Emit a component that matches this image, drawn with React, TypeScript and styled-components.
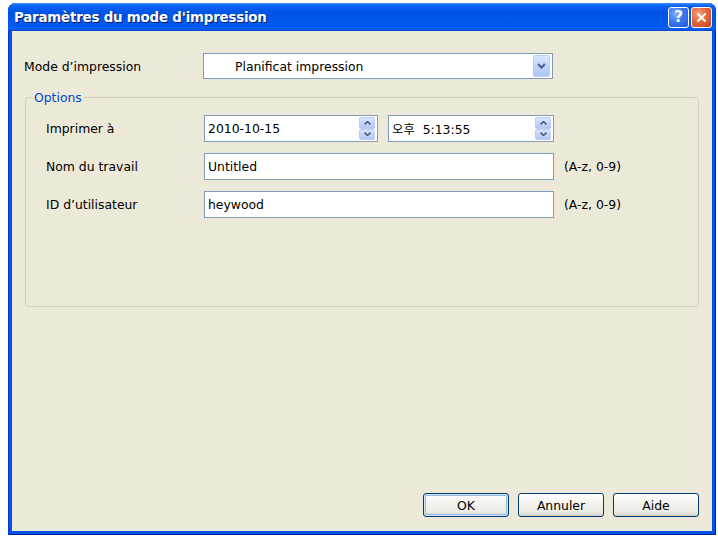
import styled, { createGlobalStyle } from "styled-components";

const GlobalStyle = createGlobalStyle`
    html, body {
        margin: 0;
        padding: 0;
        background: #fff;
    }
    body {
        font-family: "DejaVu Sans", "Noto Sans CJK KR", sans-serif;
        font-size: 12.4px;
    }
`

const Page = styled.div`
    width: 718px;
    height: 537px;
    padding: 3px 2px 0 8px;
    box-sizing: border-box;
`

const Window = styled.div`
    width: 708px;
    height: 532px;
    display: flex;
    flex-direction: column;
    border-radius: 8px 8px 0 0;
    background: #0054e3;
    box-shadow: inset 1px 0 0 #0831d9, inset -1px 0 0 #001ea0, inset 0 -1px 0 #001ea0;
    overflow: hidden;
`

const TitleBar = styled.div`
    height: 28px;
    flex: none;
    display: flex;
    align-items: center;
    padding: 0 4px 0 6px;
    background: linear-gradient(to bottom, #3d8ffd 0%, #0a62f5 10%, #0054e3 35%, #0058ee 80%, #0a5ff4 92%, #0047d0 100%);
`

const Title = styled.div`
    flex: 1;
    color: #fff;
    font-family: "DejaVu Sans", sans-serif;
    font-weight: bold;
    font-size: 13.4px;
    letter-spacing: -0.2px;
    text-shadow: 1px 1px 0 #0a1e6a;
    padding-top: 1px;
`

const CaptionButton = styled.div<{ $kind: "help" | "close" }>`
    width: 21px;
    height: 21px;
    box-sizing: border-box;
    margin-left: 2px;
    border: 1px solid #fff;
    border-radius: 3px;
    display: flex;
    align-items: center;
    justify-content: center;
    color: #fff;
    font-family: "DejaVu Sans", sans-serif;
    font-weight: bold;
    font-size: 15px;
    background: ${p => p.$kind === "close"
        ? "radial-gradient(circle at 35% 30%, #f3a07e 0%, #e4683c 45%, #c7401b 100%)"
        : "radial-gradient(circle at 35% 30%, #7eaefc 0%, #3a78f0 45%, #1f55d8 100%)"};
`

const Client = styled.div`
    flex: 1;
    margin: 0 4px 4px 4px;
    background: #ece9d8;
    display: flex;
    flex-direction: column;
    padding: 22px 12px 14px 12px;
    color: #000;
`

const ModeRow = styled.div`
    display: flex;
    align-items: center;
    height: 26px;
`

const Label = styled.div<{ $width: number }>`
    width: ${p => p.$width}px;
    flex: none;
`

const Select = styled.div`
    width: 350px;
    height: 26px;
    box-sizing: border-box;
    border: 1px solid #7f9db9;
    background: #fff;
    display: flex;
    align-items: center;
    padding: 1px 2px 1px 31px;
`

const SelectText = styled.div`
    flex: 1;
`

const ArrowButton = styled.div<{ $h: number }>`
    width: 17px;
    height: ${p => p.$h}px;
    box-sizing: border-box;
    border: 1px solid #b9cdf6;
    border-radius: 2px;
    background: linear-gradient(to bottom, #dbe6fe 0%, #c0d3fb 50%, #aec4f4 100%);
    display: flex;
    align-items: center;
    justify-content: center;
`

const GroupBox = styled.div`
    position: relative;
    margin: 18px 1px 0 1px;
    height: 210px;
    box-sizing: border-box;
    border: 1px solid #d0d0bf;
    border-radius: 4px;
    padding: 17px 0 0 20px;
    display: flex;
    flex-direction: column;
    gap: 11px;
`

const Legend = styled.div`
    position: absolute;
    top: -8px;
    left: 6px;
    padding: 0 2px;
    background: #ece9d8;
    color: #0046d5;
`

const FieldRow = styled.div`
    display: flex;
    align-items: center;
    height: 27px;
`

const TextBox = styled.div<{ $width: number }>`
    width: ${p => p.$width}px;
    height: 27px;
    box-sizing: border-box;
    border: 1px solid #7f9db9;
    background: #fff;
    display: flex;
    align-items: center;
    padding: 0 2px 0 3px;
    flex: none;
`

const BoxText = styled.div`
    flex: 1;
    white-space: pre;
`

const Spin = styled.div`
    width: 16px;
    height: 23px;
    display: flex;
    flex-direction: column;
`

const SpinHalf = styled.div`
    flex: 1;
    box-sizing: border-box;
    border: 1px solid #b9cdf6;
    border-radius: 2px;
    background: linear-gradient(to bottom, #dbe6fe 0%, #c0d3fb 60%, #b0c6f5 100%);
    display: flex;
    align-items: center;
    justify-content: center;
`

const Hint = styled.div`
    margin-left: 10px;
`

const ButtonRow = styled.div`
    margin-top: auto;
    display: flex;
    justify-content: flex-end;
    gap: 9px;
    padding-right: 1px;
`

const PushButton = styled.div<{ $default?: boolean }>`
    width: 86px;
    height: 24px;
    box-sizing: border-box;
    border: 1px solid #003c74;
    border-radius: 3px;
    display: flex;
    align-items: center;
    justify-content: center;
    background: linear-gradient(to bottom, #ffffff 0%, #f4f3ee 40%, #ecebe6 80%, #d6d0c5 100%);
    box-shadow: ${p => p.$default
        ? "inset 0 0 0 1px #cee7ff, inset 0 0 0 2px #98b8ea"
        : "none"};
`

const Chevron = ({ dir }: { dir: "up" | "down" }) => (
    <svg width="7" height="4" viewBox="0 0 7 4">
        <path
            d={dir === "up" ? "M0.5 3.5 L3.5 0.5 L6.5 3.5" : "M0.5 0.5 L3.5 3.5 L6.5 0.5"}
            fill="none"
            stroke="#4d6185"
            strokeWidth="1.6"
        />
    </svg>
)

const Spinner = () => (
    <Spin>
        <SpinHalf><Chevron dir="up" /></SpinHalf>
        <SpinHalf><Chevron dir="down" /></SpinHalf>
    </Spin>
)

export default function App() {
    return (
        <Page>
            <GlobalStyle />
            <Window>
                <TitleBar>
                    <Title>Paramètres du mode d'impression</Title>
                    <CaptionButton $kind="help">?</CaptionButton>
                    <CaptionButton $kind="close">
                        <svg width="11" height="11" viewBox="0 0 11 11">
                            <path d="M1.5 1.5 L9.5 9.5 M9.5 1.5 L1.5 9.5" stroke="#fff" strokeWidth="2" />
                        </svg>
                    </CaptionButton>
                </TitleBar>
                <Client>
                    <ModeRow>
                        <Label $width={179}>Mode d’impression</Label>
                        <Select>
                            <SelectText>Planificat impression</SelectText>
                            <ArrowButton $h={22}>
                                <svg width="9" height="6" viewBox="0 0 9 6">
                                    <path d="M1 1 L4.5 4.5 L8 1" fill="none" stroke="#4d6185" strokeWidth="2" />
                                </svg>
                            </ArrowButton>
                        </Select>
                    </ModeRow>
                    <GroupBox>
                        <Legend>Options</Legend>
                        <FieldRow>
                            <Label $width={158}>Imprimer à</Label>
                            <TextBox $width={174}>
                                <BoxText>2010-10-15</BoxText>
                                <Spinner />
                            </TextBox>
                            <TextBox $width={166} style={{ marginLeft: 10 }}>
                                <BoxText>오후  5:13:55</BoxText>
                                <Spinner />
                            </TextBox>
                        </FieldRow>
                        <FieldRow>
                            <Label $width={158}>Nom du travail</Label>
                            <TextBox $width={350}>
                                <BoxText>Untitled</BoxText>
                            </TextBox>
                            <Hint>(A-z, 0-9)</Hint>
                        </FieldRow>
                        <FieldRow>
                            <Label $width={158}>ID d’utilisateur</Label>
                            <TextBox $width={350}>
                                <BoxText>heywood</BoxText>
                            </TextBox>
                            <Hint>(A-z, 0-9)</Hint>
                        </FieldRow>
                    </GroupBox>
                    <ButtonRow>
                        <PushButton $default>OK</PushButton>
                        <PushButton>Annuler</PushButton>
                        <PushButton>Aide</PushButton>
                    </ButtonRow>
                </Client>
            </Window>
        </Page>
    )
}
